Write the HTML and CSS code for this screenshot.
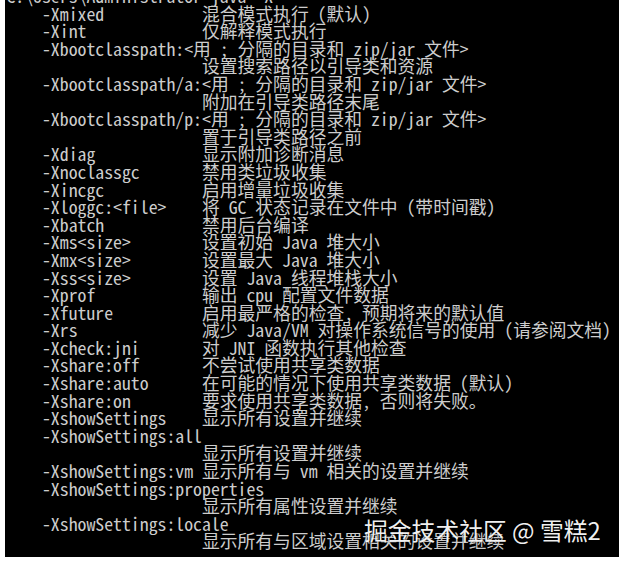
FILE: index.html
```html
<!DOCTYPE html>
<html lang="zh-CN">
<head>
<meta charset="utf-8">
<title>java -X</title>
<link rel="stylesheet" href="styles.css">
</head>
<body>
<div class="console">
<pre class="output">C:\Users\Administrator&gt;java -X
    -Xmixed           混合模式执行 (默认)
    -Xint             仅解释模式执行
    -Xbootclasspath:&lt;用 ; 分隔的目录和 zip/jar 文件&gt;
                      设置搜索路径以引导类和资源
    -Xbootclasspath/a:&lt;用 ; 分隔的目录和 zip/jar 文件&gt;
                      附加在引导类路径末尾
    -Xbootclasspath/p:&lt;用 ; 分隔的目录和 zip/jar 文件&gt;
                      置于引导类路径之前
    -Xdiag            显示附加诊断消息
    -Xnoclassgc       禁用类垃圾收集
    -Xincgc           启用增量垃圾收集
    -Xloggc:&lt;file&gt;    将 GC 状态记录在文件中 (带时间戳)
    -Xbatch           禁用后台编译
    -Xms&lt;size&gt;        设置初始 Java 堆大小
    -Xmx&lt;size&gt;        设置最大 Java 堆大小
    -Xss&lt;size&gt;        设置 Java 线程堆栈大小
    -Xprof            输出 cpu 配置文件数据
    -Xfuture          启用最严格的检查, 预期将来的默认值
    -Xrs              减少 Java/VM 对操作系统信号的使用 (请参阅文档)
    -Xcheck:jni       对 JNI 函数执行其他检查
    -Xshare:off       不尝试使用共享类数据
    -Xshare:auto      在可能的情况下使用共享类数据 (默认)
    -Xshare:on        要求使用共享类数据, 否则将失败。
    -XshowSettings    显示所有设置并继续
    -XshowSettings:all
                      显示所有设置并继续
    -XshowSettings:vm 显示所有与 vm 相关的设置并继续
    -XshowSettings:properties
                      显示所有属性设置并继续
    -XshowSettings:locale
                      显示所有与区域设置相关的设置并继续</pre>
<div class="watermark">掘金技术社区 @ 雪糕2</div>
</div>
</body>
</html>
```

FILE: styles.css
```css
html, body {
  margin: 0;
  padding: 0;
  background: #ffffff;
}

body {
  width: 619px;
  height: 565px;
  overflow: hidden;
}

.console {
  position: relative;
  margin-left: 5px;
  width: 614px;
  height: 557px;
  background: #000000;
  overflow: hidden;
}

.output {
  margin: -13px 0 0 0;
  padding-left: 1.4px;
  font-family: "Noto Sans Mono CJK SC", "Noto Sans CJK SC", monospace;
  font-size: 17.8px;
  line-height: 17.6px;
  color: #cdcdcd;
  white-space: pre;
}

.watermark {
  position: absolute;
  left: 359px;
  top: 515px;
  font-family: "Noto Sans CJK SC", sans-serif;
  font-size: 23.8px;
  line-height: 30px;
  color: rgba(255, 255, 255, 0.94);
  text-shadow: 0 0 2px rgba(0, 0, 0, 0.6);
  white-space: nowrap;
}
```
